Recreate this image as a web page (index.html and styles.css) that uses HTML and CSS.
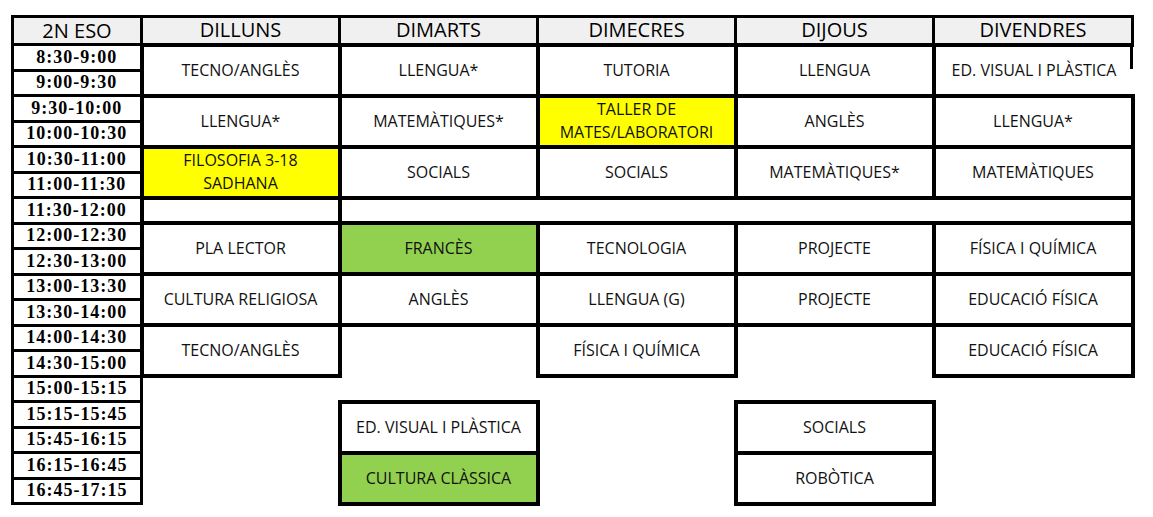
FILE: index.html
```html
<!DOCTYPE html>
<html lang="ca">
<head>
<meta charset="utf-8">
<title>Horari 2N ESO</title>
<link rel="stylesheet" href="styles.css">
</head>
<body>
<div class="page">
<table class="horari">
<colgroup><col class="col-time"><col class="col-day"><col class="col-day"><col class="col-day"><col class="col-day"><col class="col-last"></colgroup>
<thead>
<tr class="head"><th class="h">2N ESO</th><th class="h">DILLUNS</th><th class="h">DIMARTS</th><th class="h">DIMECRES</th><th class="h">DIJOUS</th><th class="h">DIVENDRES</th></tr>
</thead>
<tbody>
<tr><td class="t">8:30-9:00</td><td class="c" rowspan="2">TECNO/ANGLÈS</td><td class="c" rowspan="2">LLENGUA*</td><td class="c" rowspan="2">TUTORIA</td><td class="c" rowspan="2">LLENGUA</td><td class="c open-right" rowspan="2">ED. VISUAL I PLÀSTICA</td></tr>
<tr><td class="t">9:00-9:30</td></tr>
<tr><td class="t">9:30-10:00</td><td class="c" rowspan="2">LLENGUA*</td><td class="c" rowspan="2">MATEMÀTIQUES*</td><td class="c yellow" rowspan="2">TALLER DE<br>MATES/LABORATORI</td><td class="c" rowspan="2">ANGLÈS</td><td class="c" rowspan="2">LLENGUA*</td></tr>
<tr><td class="t">10:00-10:30</td></tr>
<tr><td class="t">10:30-11:00</td><td class="c yellow" rowspan="2">FILOSOFIA 3-18<br>SADHANA</td><td class="c" rowspan="2">SOCIALS</td><td class="c" rowspan="2">SOCIALS</td><td class="c" rowspan="2">MATEMÀTIQUES*</td><td class="c" rowspan="2">MATEMÀTIQUES</td></tr>
<tr><td class="t">11:00-11:30</td></tr>
<tr><td class="t">11:30-12:00</td><td class="c"></td><td class="c" colspan="4"></td></tr>
<tr><td class="t">12:00-12:30</td><td class="c" rowspan="2">PLA LECTOR</td><td class="c green" rowspan="2">FRANCÈS</td><td class="c" rowspan="2">TECNOLOGIA</td><td class="c" rowspan="2">PROJECTE</td><td class="c" rowspan="2">FÍSICA I QUÍMICA</td></tr>
<tr><td class="t">12:30-13:00</td></tr>
<tr><td class="t">13:00-13:30</td><td class="c" rowspan="2">CULTURA RELIGIOSA</td><td class="c" rowspan="2">ANGLÈS</td><td class="c" rowspan="2">LLENGUA (G)</td><td class="c" rowspan="2">PROJECTE</td><td class="c" rowspan="2">EDUCACIÓ FÍSICA</td></tr>
<tr><td class="t">13:30-14:00</td></tr>
<tr><td class="t">14:00-14:30</td><td class="c" rowspan="2">TECNO/ANGLÈS</td><td class="e" rowspan="2"></td><td class="c" rowspan="2">FÍSICA I QUÍMICA</td><td class="e" rowspan="2"></td><td class="c" rowspan="2">EDUCACIÓ FÍSICA</td></tr>
<tr><td class="t">14:30-15:00</td></tr>
<tr><td class="t">15:00-15:15</td><td class="e" rowspan="5"></td><td class="e"></td><td class="e" rowspan="5"></td><td class="e"></td><td class="e" rowspan="5"></td></tr>
<tr><td class="t">15:15-15:45</td><td class="c box" rowspan="2">ED. VISUAL I PLÀSTICA</td><td class="c box" rowspan="2">SOCIALS</td></tr>
<tr><td class="t">15:45-16:15</td></tr>
<tr><td class="t">16:15-16:45</td><td class="c box green" rowspan="2">CULTURA CLÀSSICA</td><td class="c box" rowspan="2">ROBÒTICA</td></tr>
<tr><td class="t">16:45-17:15</td></tr>
</tbody>
</table>
</div>
</body>
</html>
```

FILE: styles.css
```css
html, body {
  margin: 0;
  background: #fff;
}
body {
  font-family: "Open Sans", "Liberation Sans", sans-serif;
  color: #111;
}
.page {
  padding: 15px 0 0 11px;
}
.horari {
  border-collapse: collapse;
  table-layout: fixed;
  width: 1120px;
}
.col-time { width: 129px; }
.col-day { width: 198px; }
.col-last { width: 199px; }
.horari th,
.horari td {
  padding: 0;
  text-align: center;
  vertical-align: middle;
}
.head { height: 28px; }
.horari tbody tr { height: 25.5px; }
.h {
  border: 3px solid #000;
  background: #f0f0f0;
  font-weight: 400;
  font-size: 20px;
  line-height: 22px;
  color: #000;
}
.t {
  border: 3px solid #000;
  font-family: "Liberation Serif", "Times New Roman", serif;
  font-weight: 700;
  font-size: 18px;
  letter-spacing: 1px;
  line-height: 19px;
  color: #000;
}
.c {
  border: 4px solid #000;
  font-size: 16px;
  line-height: 23px;
}
.yellow { background: #ffff00; }
.green { background: #92d050; }
.box { border-width: 4px; }
.e { border: none; }
.open-right {
  border-right: none;
  background: linear-gradient(#000, #000) right top / 3px 22px no-repeat;
}
```
